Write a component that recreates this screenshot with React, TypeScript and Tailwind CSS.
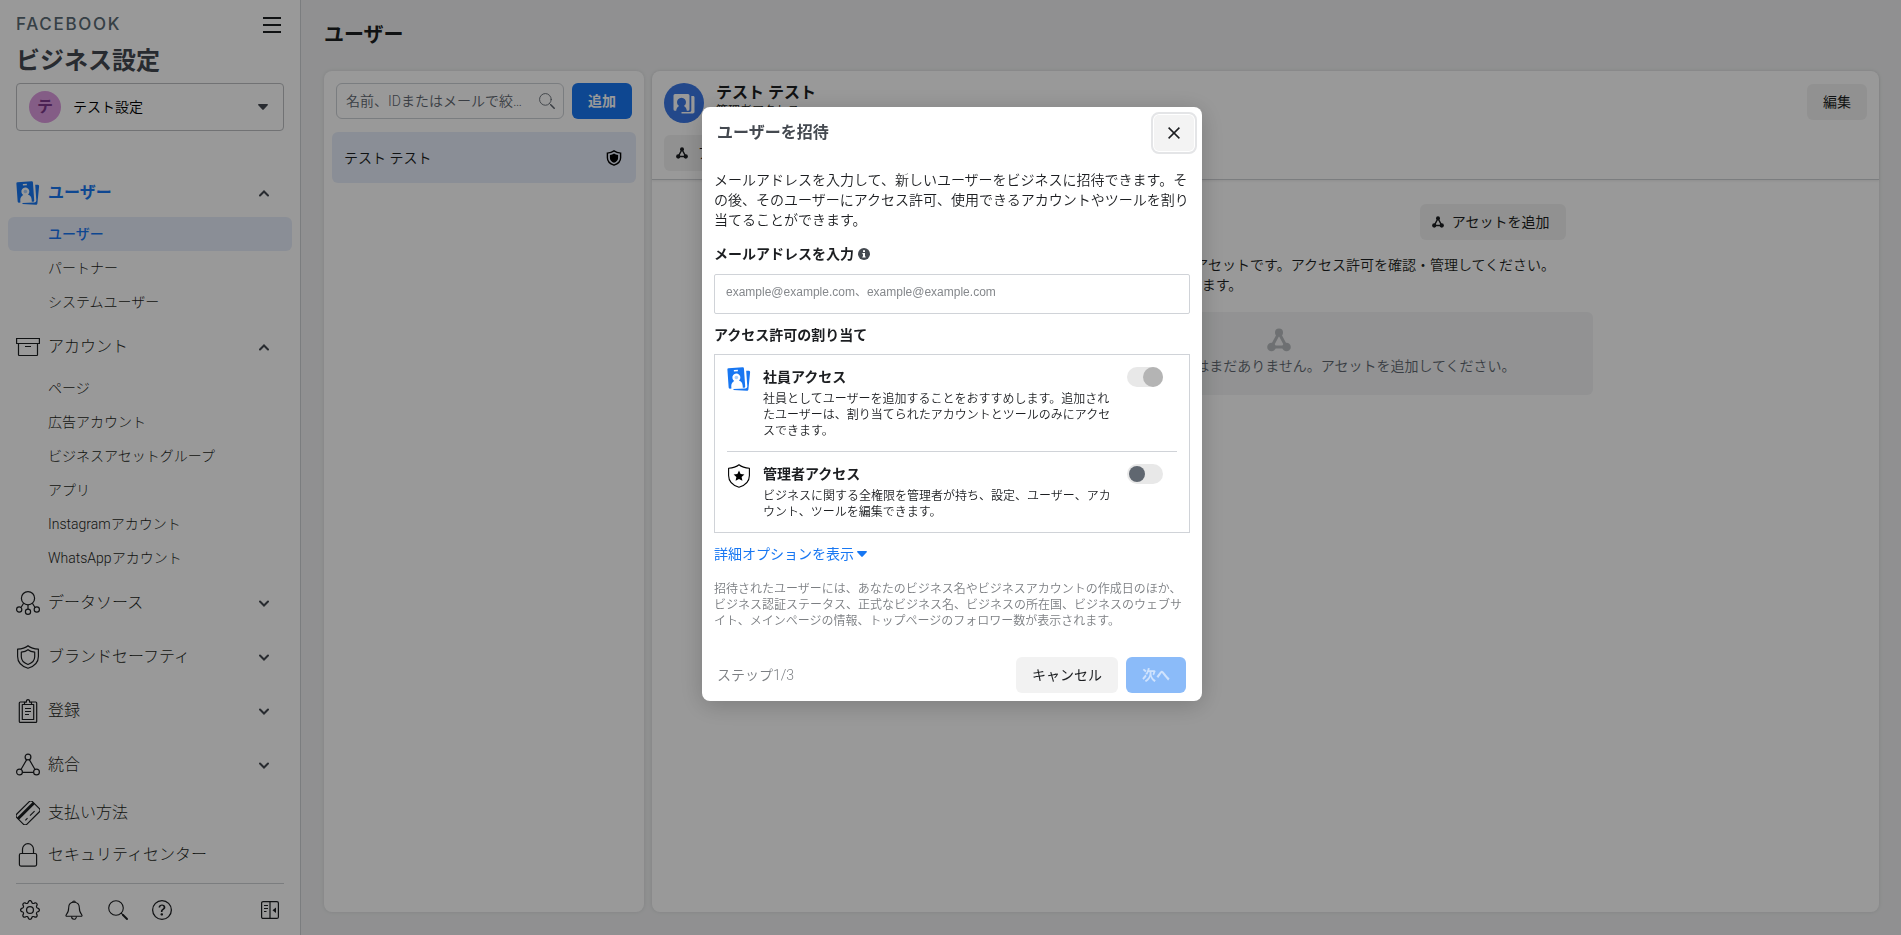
import type { ReactNode } from "react";
import { BsGear, BsQuestionCircle } from "react-icons/bs";

type IconProps = { className?: string };

/* Icons */
const UsersIcon = ({ className = "size-6" }: IconProps) => (
  <svg viewBox="0 0 24 24" className={className} fill="currentColor">
    <path
      transform="rotate(-4 9 11)"
      fillRule="evenodd"
      d="M2.200.8h14.200a1.200 1.200 0 0 1 1.200 1.200v18a1.200 1.200 0 0 1-1.200 1.200h-1.300v-2c0-2.700-1.300-4.500-3.300-5.400a4 4 0 1 0-4.800 0c-2 .9-3.300 2.700-3.300 5.400v2H2.200A1.200 1.200 0 0 1 1 20V2A1.200 1.200 0 0 1 2.200.8ZM7.400 2.800v1.500h4V2.800Z"
    />
    <circle cx="9.400" cy="10.500" r="1.800" opacity=".35" />
    <path d="M19.200 3.800h2.700c.8.100 1.300.7 1.200 1.500l-1.700 17.100c-.1.900-.8 1.400-1.600 1.300L6.500 22.900v-.8l11.900-.6c1.200-.1 2-1.100 1.900-2.300Z" />
  </svg>
);

const ContactsIcon = ({ className = "size-6" }: IconProps) => (
  <svg viewBox="0 0 24 24" className={className} fill="currentColor">
    <path
      fillRule="evenodd"
      d="M3 3h13a1.500 1.500 0 0 1 1.500 1.500v13.800A1.500 1.500 0 0 1 16 19.800h-1.200c-.3-2.300-1.300-3.800-2.900-4.700a4.500 4.500 0 1 0-4.800 0c-1.600.9-2.600 2.400-2.900 4.700H3a1.500 1.500 0 0 1-1.500-1.500V4.500A1.500 1.500 0 0 1 3 3Z"
    />
    <path d="M19.300 5h1.900c.8 0 1.300.6 1.300 1.300v14.500c0 1-.7 1.700-1.700 1.700H9.500v-1.400h8c1.100 0 1.800-.8 1.800-1.800Z" />
  </svg>
);

const BoxIcon = ({ className = "size-6" }: IconProps) => (
  <svg viewBox="0 0 24 24" className={className} fill="none" stroke="currentColor" strokeWidth="1.200">
    <path d="M.6 3.500h22.800v5H.6zM2.500 8.500v11.300c0 .4.3.7.7.7h17.600c.4 0 .7-.3.7-.7V8.500M9 11.500h6" />
  </svg>
);

const DataIcon = ({ className = "size-6" }: IconProps) => (
  <svg viewBox="0 0 24 24" className={className} fill="none" stroke="currentColor" strokeWidth="1.200">
    <circle cx="12" cy="7.200" r="6.600" />
    <circle cx="3.200" cy="18.500" r="2.600" />
    <circle cx="12" cy="20.800" r="2.600" />
    <circle cx="20.800" cy="18.500" r="2.600" />
    <path d="M12 13.800v4.400M7.600 12.200 5 16.500M16.400 12.200l2.600 4.300" />
  </svg>
);

const ShieldIcon = ({ className = "size-6" }: IconProps) => (
  <svg viewBox="0 0 24 24" className={className} fill="none" stroke="currentColor" strokeWidth="1.200" strokeLinejoin="round">
    <path d="M12 .7c2.500 2 6 3.200 10.400 3.500v7.300c0 5.800-4 9.800-10.400 11.800C5.600 21.300 1.600 17.300 1.600 11.500V4.200C6 3.900 9.500 2.700 12 .7Z" />
    <path d="M12 4.700c1.700 1.300 4 2.100 6.700 2.500v4.600c0 3.700-2.400 6.200-6.700 7.700-4.300-1.500-6.700-4-6.700-7.700V7.200c2.700-.4 5-1.200 6.700-2.500Z" />
  </svg>
);

const ClipboardIcon = ({ className = "size-6" }: IconProps) => (
  <svg viewBox="0 0 24 24" className={className} fill="none" stroke="currentColor" strokeWidth="1.200" strokeLinejoin="round">
    <path d="M8.500 3H4.300c-.6 0-1 .4-1 1v18.400c0 .6.4 1 1 1h15.400c.6 0 1-.4 1-1V4c0-.6-.4-1-1-1h-4.200" />
    <path d="M8.500 5.500V3.200h1.800C10.300 1.500 11 .6 12 .6s1.700.9 1.700 2.600h1.800v2.300" />
    <path d="M8.500 5.500H6.300v15h11.400v-15h-9.200ZM9 9.500h6M9 12.500h6M9 15.500h4" />
  </svg>
);

const NodesIcon = ({ className = "size-6" }: IconProps) => (
  <svg viewBox="0 0 24 24" className={className} fill="none" stroke="currentColor" strokeWidth="1.200">
    <circle cx="12" cy="4" r="2.900" />
    <circle cx="3.500" cy="19" r="2.900" />
    <circle cx="20.500" cy="19" r="2.900" />
    <path d="M10.700 6.600 5 16.500M13.300 6.600 19 16.500M6.400 19.300h11.200" />
  </svg>
);

const NodesSolidIcon = ({ className = "size-3" }: IconProps) => (
  <svg viewBox="0 0 24 24" className={className} fill="currentColor">
    <circle cx="12" cy="4.500" r="4" />
    <circle cx="4.500" cy="19" r="4.300" />
    <circle cx="19.500" cy="19" r="4.300" />
    <path d="M12 5 4.500 19h15Z" fill="none" stroke="currentColor" strokeWidth="3" />
  </svg>
);

const CardIcon = ({ className = "size-6" }: IconProps) => (
  <svg viewBox="0 0 24 24" className={className} fill="none" stroke="currentColor" strokeWidth="1.200">
    <g transform="rotate(-45 12 12)">
      <rect x=".8" y="4.800" width="22.400" height="14.400" rx="2.600" />
      <path d="M.8 9h22.400" strokeWidth="3" />
      <path d="M5 15.300h3M11.500 15.300h6.500" strokeWidth="1.100" />
    </g>
  </svg>
);

const LockIcon = ({ className = "size-6" }: IconProps) => (
  <svg viewBox="0 0 24 24" className={className} fill="none" stroke="currentColor" strokeWidth="1.200">
    <rect x="3.400" y="10.500" width="17.200" height="12.600" rx="1.500" />
    <path d="M6.500 10.500V6.200a5.500 5.500 0 0 1 11 0v4.300" />
  </svg>
);

const BellIcon = ({ className = "size-5" }: IconProps) => (
  <svg viewBox="0 0 20 20" className={className} fill="none" stroke="currentColor" strokeWidth="1.100" strokeLinejoin="round">
    <path d="M10 2.200c-3.300 0-5.300 2.300-5.300 5.400 0 3.500-.9 5.600-2.500 7.200-.5.600-.2 1.500.6 1.500h14.400c.8 0 1.100-.9.6-1.500-1.600-1.600-2.500-3.700-2.500-7.200 0-3.100-2-5.400-5.300-5.400Z" />
    <path d="M8.700 2.300a1.300 1.300 0 0 1 2.600 0M7.600 16.500c0 3.600 4.800 3.600 4.800 0" />
  </svg>
);

const SearchIcon = ({ className = "size-5" }: IconProps) => (
  <svg viewBox="0 0 20 20" className={className} fill="none" stroke="currentColor" strokeLinecap="round">
    <circle cx="8" cy="8" r="7.300" strokeWidth="1.100" />
    <path d="m13.200 13.200 2 2" strokeWidth="1.100" />
    <path d="m15 15 4 4" strokeWidth="1.900" />
  </svg>
);

const CollapseIcon = ({ className = "size-5" }: IconProps) => (
  <svg viewBox="0 0 20 20" className={className} fill="none" stroke="currentColor" strokeWidth="1.200">
    <rect x="1.600" y="1.600" width="16.800" height="16.800" rx="1.500" />
    <path d="M10 1.600v16.800M4 5.500h4M4 8.500h4M4 11.500h2.500" />
    <path d="M16 7.500v5.500L12.500 10.200Z" fill="currentColor" stroke="none" />
  </svg>
);

const AdminShieldIcon = ({ className = "size-4" }: IconProps) => (
  <svg viewBox="0 0 16 16" className={className}>
    <path d="M8 .9c1.800 1.300 4 2 6.600 2.200v4.700c0 3.600-2.500 6.100-6.600 7.400C3.900 13.900 1.400 11.400 1.400 7.800V3.100C4 2.900 6.200 2.200 8 .9Z" fill="none" stroke="currentColor" strokeWidth="1.400" />
    <path d="M8 3.600c1.200.8 2.500 1.300 4.100 1.500v2.800c0 2.200-1.500 3.800-4.100 4.800-2.600-1-4.100-2.600-4.100-4.800V5.100c1.600-.2 2.900-.7 4.100-1.500Z" fill="currentColor" />
  </svg>
);

const StarShieldIcon = ({ className = "size-6" }: IconProps) => (
  <svg viewBox="0 0 24 24" className={className}>
    <path d="M12 .7c2.500 2 6 3.200 10.400 3.500v7.300c0 5.800-4 9.800-10.400 11.800C5.600 21.300 1.600 17.300 1.600 11.500V4.200C6 3.900 9.500 2.700 12 .7Z" fill="none" stroke="currentColor" strokeWidth="1.100" strokeLinejoin="round" />
    <path d="m12 6.500 1.600 3.500 3.800.4-2.800 2.600.8 3.800L12 14.900l-3.400 1.900.8-3.800-2.800-2.600 3.800-.4Z" fill="currentColor" />
  </svg>
);

const InfoIcon = () => (
  <svg viewBox="0 0 12 12" className="size-3">
    <circle cx="6" cy="6" r="6" fill="#444950" />
    <path d="M5 2.300h2v1.700H5zM4.400 5h2.600v3.400h.7v1.200H4.300V8.400H5V6.200h-.6Z" fill="#fff" />
  </svg>
);

const Caret = ({ className = "" }: IconProps) => (
  <svg viewBox="0 0 10 6" className={`w-[10px] h-[6px] ${className}`} fill="currentColor">
    <path d="M.8 0h8.400c.7 0 1 .8.500 1.300L5.700 5.600a1 1 0 0 1-1.400 0L.3 1.300C-.2.8.1 0 .8 0Z" />
  </svg>
);

const Chevron = ({ open }: { open: boolean }) => (
  <svg viewBox="0 0 10 7" className="w-[10px] h-[7px]" fill="none" stroke="currentColor" strokeWidth="2" strokeLinecap="round">
    <path d={open ? "M1 5.500 5 1.500l4 4" : "M1 1.500l4 4 4-4"} />
  </svg>
);

/* Sidebar data */
type Section = { label: string; icon: ReactNode; items?: string[]; active?: boolean };

const sections: Section[] = [
  {
    label: "ユーザー",
    icon: <UsersIcon />,
    items: ["ユーザー", "パートナー", "システムユーザー"],
    active: true,
  },
  {
    label: "アカウント",
    icon: <BoxIcon />,
    items: [
      "ページ",
      "広告アカウント",
      "ビジネスアセットグループ",
      "アプリ",
      "Instagramアカウント",
      "WhatsAppアカウント",
    ],
  },
  { label: "データソース", icon: <DataIcon /> },
  { label: "ブランドセーフティ", icon: <ShieldIcon /> },
  { label: "登録", icon: <ClipboardIcon /> },
  { label: "統合", icon: <NodesIcon /> },
];

const links = [
  { label: "支払い方法", icon: <CardIcon /> },
  { label: "セキュリティセンター", icon: <LockIcon /> },
];

const roles = [
  {
    id: "employee",
    title: "社員アクセス",
    desc: "社員としてユーザーを追加することをおすすめします。追加されたユーザーは、割り当てられたアカウントとツールのみにアクセスできます。",
    icon: <UsersIcon className="size-6 text-[#1877f2]" />,
    on: true,
  },
  {
    id: "admin",
    title: "管理者アクセス",
    desc: "ビジネスに関する全権限を管理者が持ち、設定、ユーザー、アカウント、ツールを編集できます。",
    icon: <StarShieldIcon className="size-6 text-black" />,
    on: false,
  },
];

function Sidebar() {
  return (
    <aside className="flex flex-col w-[301px] shrink-0 bg-white border-r border-[#ced0d4]">
      <div className="px-4 pt-[9px]">
        <div className="flex items-center justify-between h-8">
          <span className="font-['Inter',sans-serif] text-[17px] font-medium tracking-widest text-[#5b6b75]">
            FACEBOOK
          </span>
          <button type="button" aria-label="メニュー" className="flex flex-col gap-[5px] w-[18px] mr-[3px]">
            <span className="h-[2px] w-full bg-[#1c1e21]" />
            <span className="h-[2px] w-full bg-[#1c1e21]" />
            <span className="h-[2px] w-full bg-[#1c1e21]" />
          </button>
        </div>
        <h1 className="pt-[2px] text-2xl leading-9 font-bold text-[#444950]">ビジネス設定</h1>
        <div className="flex items-center gap-3 h-12 mt-1 px-3 border border-[#bcbec2] rounded">
          <span className="flex items-center justify-center rounded-full size-8 bg-[#dd9ce0] text-[#7d3a8c] text-base font-bold">
            テ
          </span>
          <select aria-label="ビジネス" className="flex-1 text-sm text-black bg-transparent outline-none appearance-none">
            <option>テスト設定</option>
          </select>
          <Caret className="mr-[3px] text-[#444950]" />
        </div>
      </div>

      {/* Navigation */}
      <nav className="flex flex-col flex-1 gap-[6px] mt-[38px] font-light text-[#1c1e21]">
        {sections.map((s) => (
          <div key={s.label} className={s.items ? "-mb-[2px]" : ""}>
            <button
              type="button"
              aria-expanded={!!s.items}
              className={`flex items-center w-full h-12 pl-4 pr-[31px] text-base ${
                s.active ? "font-bold text-[#1877f2]" : ""
              }`}
            >
              {s.icon}
              <span className="flex-1 ml-2 text-left">{s.label}</span>
              <span className="text-[#444950]">
                <Chevron open={!!s.items} />
              </span>
            </button>
            {s.items && (
              <ul className="px-2">
                {s.items.map((item, i) => {
                  const selected = s.active && i === 0;
                  return (
                    <li key={item}>
                      <a
                        href="#"
                        className={`flex items-center h-[34px] pl-10 text-sm rounded-md ${
                          selected ? "bg-[#e7edfa] font-medium text-[#1877f2]" : ""
                        }`}
                      >
                        {item}
                      </a>
                    </li>
                  );
                })}
              </ul>
            )}
          </div>
        ))}
        <div className="-mt-[3px]">
          {links.map((l) => (
            <a key={l.label} href="#" className="flex items-center gap-2 h-[42px] px-4 text-base">
              {l.icon}
              {l.label}
            </a>
          ))}
        </div>
      </nav>

      <div className="flex items-center gap-6 h-[52px] mx-4 px-1 border-t border-[#ced0d4] text-[#1c1e21]">
        <button type="button" aria-label="設定"><BsGear className="size-5" /></button>
        <button type="button" aria-label="お知らせ"><BellIcon /></button>
        <button type="button" aria-label="検索"><SearchIcon /></button>
        <button type="button" aria-label="ヘルプ"><BsQuestionCircle className="size-5" /></button>
        <button type="button" aria-label="折りたたむ" className="ml-auto"><CollapseIcon /></button>
      </div>
    </aside>
  );
}

function UserList() {
  return (
    <section className="w-80 shrink-0 bg-white rounded-lg shadow-[0_0_4px_rgba(0,0,0,0.1)]">
      <div className="flex gap-2 px-3 pt-3">
        <div className="flex items-center flex-1 min-w-0 h-9 gap-4 pl-[9px] pr-2 border border-[#ccd0d5] rounded-md">
          <input
            aria-label="ユーザーを検索"
            placeholder="名前、IDまたはメールで絞り込み"
            className="flex-1 min-w-0 text-sm text-ellipsis outline-none placeholder:text-[#606770]"
          />
          <SearchIcon className="size-4 text-[#606770]" />
        </div>
        <button type="button" className="h-9 w-[60px] rounded-md bg-[#1877f2] text-sm font-bold text-white">
          追加
        </button>
      </div>
      <button type="button" className="flex items-center justify-between w-[304px] h-[51px] mx-2 mt-[13px] pl-3 pr-[14px] rounded-md bg-[#e7edfa] text-sm">
        テスト テスト
        <AdminShieldIcon className="size-4 text-black" />
      </button>
    </section>
  );
}

function UserDetail() {
  return (
    <section className="flex-1 min-w-0 bg-white rounded-lg shadow-[0_0_4px_rgba(0,0,0,0.1)]">
      <header className="flex justify-between h-[109px] p-3 border-b border-[#ced0d4] rounded-t-lg shadow-[0_1px_3px_rgba(0,0,0,0.08)]">
        <div>
          <div className="flex gap-3">
            <span className="flex items-center justify-center text-white rounded-full size-10 bg-[#3b78e7]">
              <ContactsIcon className="size-6" />
            </span>
            <div>
              <h3 className="text-base leading-5 font-bold">テスト テスト</h3>
              <p className="text-xs leading-4">管理者アクセス</p>
            </div>
          </div>
          <button type="button" className="flex items-center gap-[10px] h-9 mt-3 px-3 rounded-md bg-[#f2f2f2] text-sm font-normal">
            <NodesSolidIcon />
            アセットを割り当て
          </button>
        </div>
        <button type="button" className="h-9 w-[60px] mt-px rounded-md bg-[#f2f2f2] text-sm font-normal">
          編集
        </button>
      </header>
      <div className="w-[654px] mx-auto pt-6">
        <div className="flex justify-end pr-[27px]">
          <button type="button" className="flex items-center gap-2 h-9 pl-3 pr-4 rounded-md bg-[#f2f2f2] text-sm font-normal">
            <NodesSolidIcon />
            アセットを追加
          </button>
        </div>
        <p className="mt-[15px] pl-3 text-sm leading-5">
          テスト テスト さんがアクセスできる各アセットです。アクセス許可を確認・管理してください。
          <br />
          アセットの追加や削除を行うこともできます。
        </p>
        <div className="flex flex-col items-center h-[83px] mt-[17px] ml-[26px] pt-4 rounded-md bg-[#f3f4f5] text-sm text-[#606770]">
          <NodesSolidIcon className="size-6 text-[#b8bbbf]" />
          <p className="mt-1 leading-5">割り当てられたアセットはまだありません。アセットを追加してください。</p>
        </div>
      </div>
    </section>
  );
}

function InviteDialog() {
  return (
    <div className="fixed inset-0 flex items-start justify-center pl-[3px] pt-[107px] bg-black/40">
      <div role="dialog" aria-labelledby="invite-title" className="w-[500px] bg-white rounded-lg shadow-[0_4px_24px_rgba(0,0,0,0.2)]">
        <header className="flex items-center justify-between pt-[5px] pl-[15px] pr-[5px]">
          <h2 id="invite-title" className="text-base font-bold text-[#444950]">ユーザーを招待</h2>
          <button
            type="button"
            aria-label="閉じる"
            className="flex items-center justify-center w-[46px] h-[42px] border-2 border-[#e4e5e7] rounded-lg bg-[#f3f3f3] shadow-[inset_0_0_0_1px_#fff]"
          >
            <svg viewBox="0 0 12 12" className="size-3" stroke="#1c1e21" strokeWidth="1.500">
              <path d="m.6.6 10.800 10.800M11.400.6.6 11.400" />
            </svg>
          </button>
        </header>

        <div className="px-3 pt-4">
          <p className="text-sm leading-5">
            メールアドレスを入力して、新しいユーザーをビジネスに招待できます。その後、そのユーザーにアクセス許可、使用できるアカウントやツールを割り当てることができます。
          </p>
          <label htmlFor="emails" className="flex items-center gap-1 mt-[14px] text-sm leading-5 font-bold">
            メールアドレスを入力
            <InfoIcon />
          </label>
          <textarea
            id="emails"
            rows={1}
            placeholder="example@example.com、example@example.com"
            className="block w-full h-10 mt-[10px] px-[11px] py-[9px] border border-[#d0d3d8] rounded-xs resize-none outline-none font-['Liberation_Sans','Noto_Sans_CJK_JP',sans-serif] font-normal text-xs placeholder:text-[#85888c]"
          />

          <h3 className="mt-[11px] text-sm leading-5 font-bold">アクセス許可の割り当て</h3>
          <div className="mt-[9px] px-3 border border-[#d0d3d8]">
            {roles.map((r, i) => (
              <div
                key={r.id}
                className={`flex items-start py-3 ${i === 0 ? "border-b border-[#d0d3d8]" : ""}`}
              >
                {r.icon}
                <div className="flex-1 ml-3">
                  <label htmlFor={r.id} className="block text-sm leading-5 font-bold">{r.title}</label>
                  <p className="w-[350px] mt-1 text-xs leading-4">{r.desc}</p>
                </div>
                <input
                  id={r.id}
                  type="checkbox"
                  role="switch"
                  defaultChecked={r.on}
                  disabled={r.on}
                  className="flex items-center w-9 h-5 mr-[14px] px-[2px] rounded-full appearance-none bg-[#e8e8e8] before:block before:size-4 before:rounded-full before:bg-[#606770] checked:justify-end checked:px-0 checked:before:size-5 checked:before:bg-[#b4b4b4]"
                />
              </div>
            ))}
          </div>

          <button type="button" className="flex items-center gap-[3px] mt-[11px] text-sm leading-5 font-normal text-[#1877f2]">
            詳細オプションを表示
            <Caret />
          </button>
          <p className="mt-[17px] text-xs leading-4 text-[#7c7f83]">
            招待されたユーザーには、あなたのビジネス名やビジネスアカウントの作成日のほか、ビジネス認証ステータス、正式なビジネス名、ビジネスの所在国、ビジネスのウェブサイト、メインページの情報、トップページのフォロワー数が表示されます。
          </p>
        </div>

        <footer className="flex items-center gap-2 pt-7 pb-2 pl-[15px] pr-4">
          <span className="flex-1 text-sm text-[#7c7f83]">ステップ1/3</span>
          <button type="button" className="h-9 w-[102px] rounded-md bg-[#f2f2f2] text-sm font-normal">
            キャンセル
          </button>
          <button type="button" disabled className="h-9 w-[60px] rounded-md bg-[#8bbbf9] text-sm font-bold text-[#d0e3fd]">
            次へ
          </button>
        </footer>
      </div>
    </div>
  );
}

export default function App() {
  return (
    <div className="flex h-screen overflow-hidden bg-[#f0f1f2] font-['Roboto','Noto_Sans_CJK_JP',sans-serif] font-[350] text-[#1c1e21]">
      <Sidebar />
      <main className="flex flex-col flex-1 min-w-0 pl-[23px] pr-[22px] pb-[23px]">
        <h2 className="flex items-center h-[71px] pb-px text-xl font-bold">ユーザー</h2>
        <div className="flex flex-1 gap-2">
          <UserList />
          <UserDetail />
        </div>
      </main>
      <InviteDialog />
    </div>
  );
}
